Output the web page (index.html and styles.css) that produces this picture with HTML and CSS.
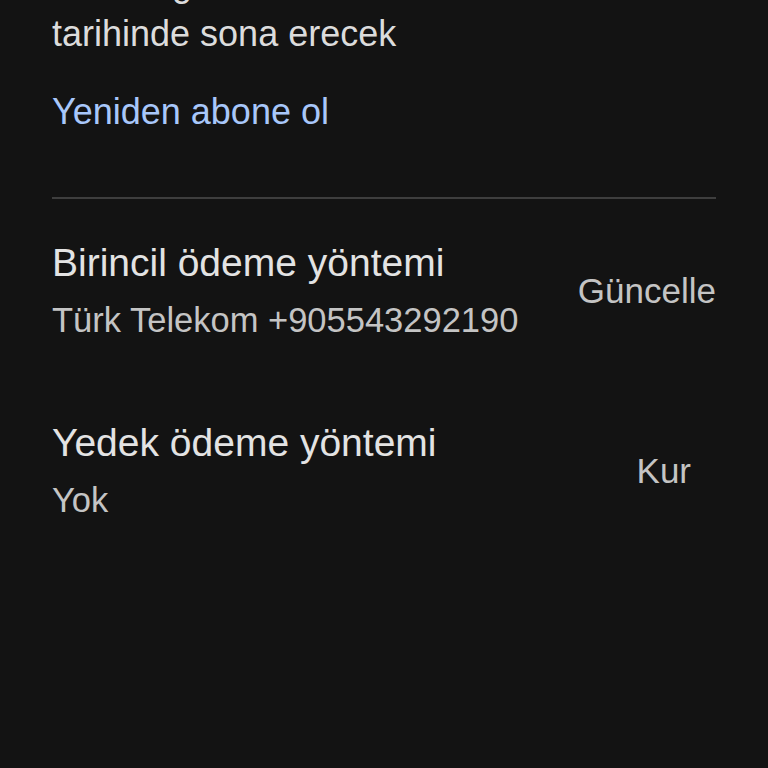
FILE: index.html
```html
<!DOCTYPE html>
<html lang="tr">
<head>
  <meta charset="UTF-8" />
  <meta name="viewport" content="width=device-width, initial-scale=1" />
  <title>Abonelik</title>
  <link rel="stylesheet" href="styles.css">
</head>
<body>
  <div class="page">
    <section class="status">
      <p class="status-text">Aboneliğiniz 13 Mart 2024<br>tarihinde sona erecek</p>
      <a href="#" class="link">Yeniden abone ol</a>
    </section>

    <hr class="divider" />

    <div class="row">
      <div class="row-text">
        <div class="row-title">Birincil ödeme yöntemi</div>
        <div class="row-sub">Türk Telekom +905543292190</div>
      </div>
      <a href="#" class="row-action">Güncelle</a>
    </div>

    <div class="row">
      <div class="row-text">
        <div class="row-title">Yedek ödeme yöntemi</div>
        <div class="row-sub">Yok</div>
      </div>
      <a href="#" class="row-action action-short">Kur</a>
    </div>
  </div>
</body>
</html>
```

FILE: styles.css
```css
html, body {
  margin: 0;
  padding: 0;
  height: 100%;
  background-color: #131313;
  overflow: hidden;
}
body {
  font-family: 'Liberation Sans', 'Roboto', sans-serif;
  color: #e3e3e3;
}
.page {
  padding: 0 52px;
  margin-top: -41px;
}
.status-text {
  margin: 0;
  font-size: 36px;
  line-height: 50px;
  color: #dcdcdc;
}
.link {
  display: block;
  width: fit-content;
  margin-top: 33px;
  font-size: 36px;
  line-height: 40px;
  color: #a8c7fa;
  text-decoration: none;
}
.divider {
  border: 0;
  border-top: 2px solid #3e3e3e;
  margin: 65px 0 0;
}
.row {
  display: flex;
  align-items: center;
  justify-content: space-between;
  padding-top: 33px;
}
.row + .row {
  padding-top: 62px;
}
.row-title {
  font-size: 39px;
  line-height: 58px;
  padding-top: 2px;
  color: #e3e3e3;
}
.row-sub {
  font-size: 34.5px;
  line-height: 60px;
  margin-top: -2px;
  color: #c4c4c4;
}
.row-action {
  font-size: 35px;
  color: #c4c4c4;
  text-decoration: none;
}
.action-short {
  margin-right: 25px;
}
```
